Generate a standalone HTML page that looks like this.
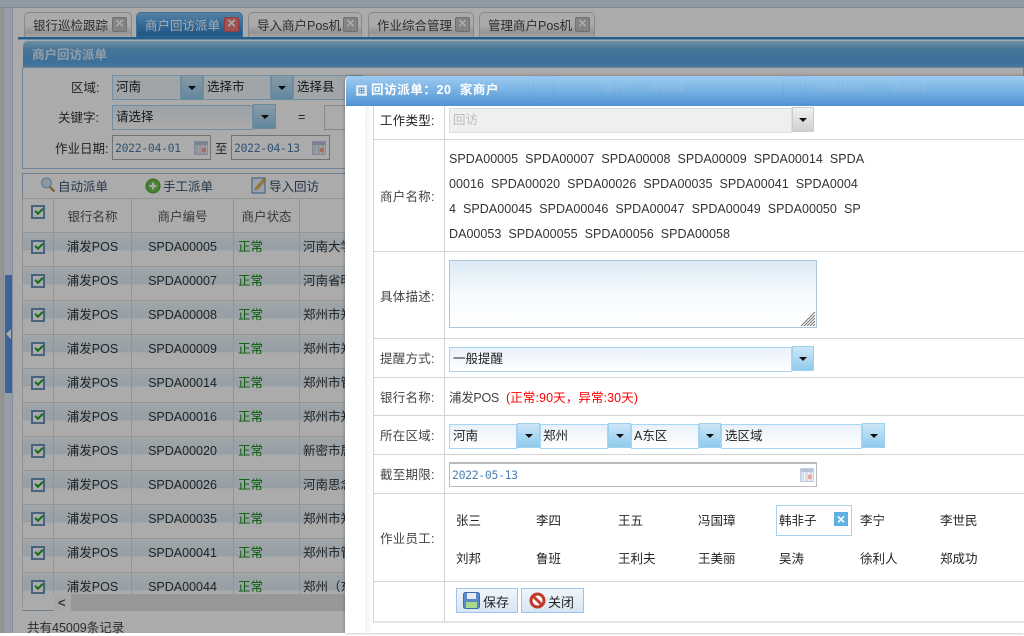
<!DOCTYPE html>
<html><head><meta charset="utf-8"><style>
html,body{margin:0;padding:0}
body{width:1024px;height:633px;overflow:hidden;position:relative;background:#fff;font:12.5px/1.2 "Liberation Sans","Noto Sans CJK SC",sans-serif;color:#333}
div,span,svg{position:absolute;box-sizing:border-box}
.t{white-space:nowrap}
.tab{top:12px;height:26px;border:1px solid #ccc;border-bottom:0;border-radius:5px 5px 0 0;background:linear-gradient(#fff 0,#fff 45%,#ddd 80%,#fff);padding:6px 0 0 8px;white-space:nowrap;font-size:12.5px}
.x{top:4px;width:15px;height:15px;background:#c4c4c4;border:1px solid #a8a8a8;border-radius:2px;color:#fff;font:bold 15px/12px "Liberation Sans";text-align:center}
.in{border:1px solid #a5d6f5;background:linear-gradient(#e9f1fa,#fff);padding:4px 0 0 3px;white-space:nowrap;color:#222}
.btn{background:linear-gradient(#cde7f8,#8fcaec);border:1px solid #9fd0ee}
.btn:after{content:"";position:absolute;left:50%;top:50%;margin:-2px 0 0 -4px;border:4px solid transparent;border-top:4px solid #111;border-bottom:0}
.dt{border:1px solid #aaa;background:#fff;color:#4b7db0;font:11.5px/24px "DejaVu Sans Mono","Liberation Mono",monospace;padding-left:2px;letter-spacing:-.35px}
.cal{width:14px;height:14px;border:1px solid #c4cde0;background:linear-gradient(#b4c2da 0,#b4c2da 3px,transparent 3px),repeating-linear-gradient(90deg,#d5dded 0,#d5dded 3px,#f4f6fa 3px,#f4f6fa 4px)}
.cal:after{content:"";position:absolute;right:1px;bottom:2px;width:4px;height:4px;background:#f2a48d}
table{position:absolute;border-collapse:collapse;table-layout:fixed;left:22px;top:198px;width:340px}
td{height:29px;padding:0 0 4px;border:1px solid #dcdcdc;text-align:center;white-space:nowrap;overflow:hidden;background:linear-gradient(#eef6fb,#e0eef8 50%,#fff 52%,#fff)}
tr.h td{background:#fff;padding:3px 0 0;height:30px}
tr.h td:first-child{padding:0 0 5px;height:28px}
td.s{color:#0a8a0a;text-align:left;padding-left:4px}
td.a{text-align:left;padding-left:3px}
td b{display:inline-block;box-sizing:border-box;vertical-align:middle;position:relative;width:14px;height:14px;border:2px solid #6a94bd;background:#fff;margin-top:-2px}
td b:after{content:"";position:absolute;left:2px;top:1px;width:6px;height:3px;border:solid #20a02a;border-width:0 0 2px 2px;transform:rotate(-45deg)}
.line{left:373px;height:1px;width:651px;background:#d4d4d4}
.lb{left:380px;white-space:nowrap;color:#444;letter-spacing:.25px}
.st{white-space:nowrap;color:#222;font-size:12.5px}
.code{left:449px;white-space:pre;color:#333;font-size:12.5px;letter-spacing:.04px}
.b2{top:588px;height:25px;border:1px solid #9cc4ec;background:linear-gradient(#f0f6fc,#d7e5f2);padding:6px 0 0 26px;font-size:13px;color:#222}
</style></head><body>
<!-- background page -->
<div style="left:0;top:0;width:1024px;height:8px;background:linear-gradient(90deg,#d7e9f0,#d6e9f2)"></div>
<div style="left:0;top:7px;width:1024px;height:1px;background:#b6cfe6"></div>
<div style="left:0;top:8px;width:3px;height:625px;background:#ddd"></div>
<div style="left:3px;top:8px;width:10px;height:625px;background:#e2ecf6;border-left:1px solid #c3d5e9;border-right:1px solid #c3d5e9"></div>
<div style="left:5px;top:275px;width:7px;height:118px;background:#5b92e6"></div>
<div style="left:6px;top:329px;border:5px solid transparent;border-right:5px solid #fff;border-left:0"></div>
<div class="tab" style="left:24px;width:108px;color:#444">银行巡检跟踪<span class="x" style="left:87px">×</span></div>
<div class="tab" style="left:136px;width:107px;background:linear-gradient(#7fc4f7,#4a9ade 50%,#2f83c9 85%,#4e9ee0);color:#fff;border-color:#5aa5e0">商户回访派单<span class="x" style="left:87px;background:#f07a7a;border-color:#d55">×</span></div>
<div class="tab" style="left:248px;width:114px;color:#444">导入商户Pos机<span class="x" style="left:94px">×</span></div>
<div class="tab" style="left:368px;width:106px;color:#444">作业综合管理<span class="x" style="left:86px">×</span></div>
<div class="tab" style="left:479px;width:116px;color:#444">管理商户Pos机<span class="x" style="left:95px">×</span></div>
<div style="left:18px;top:37px;width:1006px;height:2px;background:#3b8ccc"></div>
<div style="left:18px;top:39px;width:1006px;height:1px;background:#9fcdf0"></div>
<div style="left:23px;top:41px;width:1001px;height:27px;background:linear-gradient(#a5d4f4,#6bb0e4 30%,#5aa7e6 75%,#6fb3ea);border-radius:5px 0 0 0"></div>
<div class="t" style="left:32px;top:48px;color:#d8ecfb;font-weight:bold;font-size:12.5px">商户回访派单</div>
<div style="left:22px;top:67px;width:1002px;height:102px;border:1px solid #a8c6e6;background:#fff"></div>
<div class="t" style="left:71px;top:81px">区域:</div>
<div class="in" style="left:112px;top:75px;width:69px;height:25px;background:#f1f6fb;font-size:12.5px">河南</div><div class="btn" style="left:181px;top:75px;width:22px;height:25px"></div>
<div class="in" style="left:203px;top:75px;width:68px;height:25px;background:#f1f6fb">选择市</div><div class="btn" style="left:271px;top:75px;width:22px;height:25px"></div>
<div class="in" style="left:293px;top:75px;width:70px;height:25px;background:#f1f6fb">选择县</div>
<div class="t" style="left:58px;top:111px">关键字:</div>
<div class="in" style="left:112px;top:105px;width:141px;height:25px">请选择</div><div class="btn" style="left:253px;top:104px;width:23px;height:25px"></div>
<div class="t" style="left:298px;top:110px">=</div>
<div style="left:324px;top:105px;width:30px;height:25px;border:1px solid #ccc"></div>
<div class="t" style="left:55px;top:142px">作业日期:</div>
<div class="dt" style="left:112px;top:135px;width:99px;height:25px">2022-04-01<span class="cal" style="left:81px;top:5px"></span></div>
<div class="t" style="left:215px;top:142px">至</div>
<div class="dt" style="left:231px;top:135px;width:99px;height:25px">2022-04-13<span class="cal" style="left:80px;top:5px"></span></div>
<div style="left:22px;top:173px;width:1002px;height:416px;border:1px solid #a8bfd8;background:#fff"></div>
<svg style="left:40px;top:176px" width="16" height="18" viewBox="0 0 16 18"><circle cx="6.500" cy="7" r="5" fill="#cfe2f5" stroke="#8fb0d2"/><path d="M10 11l4.500 4.500" stroke="#c29058" stroke-width="2.500"/></svg>
<div class="t" style="left:58px;top:180px;color:#34506d">自动派单</div>
<svg style="left:145px;top:178px" width="16" height="16" viewBox="0 0 16 16"><circle cx="8" cy="8" r="7" fill="#6cc04a" stroke="#4f9a35"/><path d="M8 4.500v7M4.500 8h7" stroke="#fff" stroke-width="2.200"/></svg>
<div class="t" style="left:163px;top:180px;color:#34506d">手工派单</div>
<svg style="left:251px;top:176px" width="17" height="18" viewBox="0 0 17 18"><rect x="1" y="2" width="13" height="15" fill="#e8f1fb" stroke="#4f86c0"/><path d="M4 14l1-3 8-9 2 2-8 9z" fill="#e9b44c" stroke="#b98a2e" stroke-width=".5"/></svg>
<div class="t" style="left:269px;top:180px;color:#34506d">导入回访</div>
<table><colgroup><col style="width:31px"><col style="width:78px"><col style="width:102px"><col style="width:66px"><col style="width:63px"></colgroup>
<tr class="h"><td><b></b></td><td style="color:#555">银行名称</td><td style="color:#555">商户编号</td><td style="color:#555">商户状态</td><td></td></tr>
<tr><td><b></b></td><td>浦发POS</td><td>SPDA00005</td><td class="s">正常</td><td class="a">河南大学</td></tr>
<tr><td><b></b></td><td>浦发POS</td><td>SPDA00007</td><td class="s">正常</td><td class="a">河南省明</td></tr>
<tr><td><b></b></td><td>浦发POS</td><td>SPDA00008</td><td class="s">正常</td><td class="a">郑州市郑</td></tr>
<tr><td><b></b></td><td>浦发POS</td><td>SPDA00009</td><td class="s">正常</td><td class="a">郑州市郑</td></tr>
<tr><td><b></b></td><td>浦发POS</td><td>SPDA00014</td><td class="s">正常</td><td class="a">郑州市管</td></tr>
<tr><td><b></b></td><td>浦发POS</td><td>SPDA00016</td><td class="s">正常</td><td class="a">郑州市郑</td></tr>
<tr><td><b></b></td><td>浦发POS</td><td>SPDA00020</td><td class="s">正常</td><td class="a">新密市居</td></tr>
<tr><td><b></b></td><td>浦发POS</td><td>SPDA00026</td><td class="s">正常</td><td class="a">河南思念</td></tr>
<tr><td><b></b></td><td>浦发POS</td><td>SPDA00035</td><td class="s">正常</td><td class="a">郑州市郑</td></tr>
<tr><td><b></b></td><td>浦发POS</td><td>SPDA00041</td><td class="s">正常</td><td class="a">郑州市管</td></tr>
<tr><td><b></b></td><td>浦发POS</td><td>SPDA00044</td><td class="s">正常</td><td class="a">郑州（东</td></tr>
</table>
<div style="left:23px;top:594px;width:330px;height:39px;background:#fff"></div>
<div style="left:22px;top:610px;width:332px;height:1px;background:#a8bfd8"></div>
<div style="left:54px;top:594px;width:17px;height:17px;background:#fbfbfb"></div>
<div style="left:71px;top:594px;width:283px;height:17px;background:#e2e2e2"></div>
<div class="t" style="left:58px;top:594px;font:bold 13px/17px 'Liberation Sans';color:#555">&lt;</div>
<div class="t" style="left:27px;top:621px;color:#444">共有45009条记录</div>
<!-- mask -->
<div style="left:0;top:0;width:1024px;height:633px;background:rgba(0,0,0,.33)"></div>
<!-- modal -->
<div style="left:345px;top:76px;width:679px;height:557px;background:#fff;border-radius:5px 0 0 0;box-shadow:0 0 3px rgba(0,0,0,.35)"></div>
<div style="left:346px;top:76px;width:678px;height:30px;background:linear-gradient(#9ccbf0,#7bb4e4 45%,#4f92d3);border-radius:5px 0 0 0"></div>
<div class="t" style="left:602px;top:81px;color:rgba(255,255,255,.08)">银行：</div><div class="t" style="left:647px;top:81px;color:rgba(255,255,255,.08)">请选择</div>
<div class="t" style="left:817px;top:81px;color:rgba(255,255,255,.08)">分配状态：</div><div class="t" style="left:890px;top:81px;color:rgba(255,255,255,.08)">请选择</div>
<div style="left:533px;top:76px;width:21px;height:23px;border:1px solid rgba(60,120,180,.08)"></div>
<div style="left:783px;top:76px;width:23px;height:23px;border:1px solid rgba(60,120,180,.08)"></div>
<svg style="left:356px;top:85px" width="11" height="11" viewBox="0 0 11 11"><rect x=".5" y=".5" width="10" height="10" fill="#e9f3fb" stroke="#cfe2f4"/><path d="M3 3h5v5H3zM5.500 3v5M3 5.500h5" fill="none" stroke="#5a90c4"/></svg>
<div class="t" style="left:371px;top:83px;color:#fff;font-weight:bold;font-size:12.5px;letter-spacing:.6px">回访派单：20&nbsp; 家商户</div>
<div style="left:365px;top:106px;width:8px;height:527px;background:linear-gradient(90deg,#f3f3f3,#fff)"></div>
<div style="left:373px;top:106px;width:1px;height:516px;background:#d4d4d4"></div>
<div style="left:444px;top:106px;width:1px;height:516px;background:#d4d4d4"></div>
<div class="line" style="top:139px"></div><div class="line" style="top:251px"></div><div class="line" style="top:338px"></div><div class="line" style="top:377px"></div><div class="line" style="top:415px"></div><div class="line" style="top:454px"></div><div class="line" style="top:493px"></div><div class="line" style="top:581px"></div>
<div class="line" style="top:621px;height:2px;background:#e4e4e4"></div>
<div class="lb" style="top:114px;color:#222">工作类型:</div>
<div style="left:449px;top:108px;width:343px;height:25px;background:#efefef;border:1px solid #ddd;padding:4px 0 0 3px;color:#bbb">回访</div>
<div class="btn" style="left:792px;top:107px;width:22px;height:25px;background:linear-gradient(#f2f2f2,#cfcfcf);border-color:#ccc"></div>
<div class="lb" style="top:190px">商户名称:</div>
<div class="code" style="top:152px">SPDA00005  SPDA00007  SPDA00008  SPDA00009  SPDA00014  SPDA</div>
<div class="code" style="top:177px">00016  SPDA00020  SPDA00026  SPDA00035  SPDA00041  SPDA0004</div>
<div class="code" style="top:202px">4  SPDA00045  SPDA00046  SPDA00047  SPDA00049  SPDA00050  SP</div>
<div class="code" style="top:227px">DA00053  SPDA00055  SPDA00056  SPDA00058</div>
<div class="lb" style="top:290px">具体描述:</div>
<div style="left:449px;top:260px;width:368px;height:68px;border:1px solid #a9c7de;background:linear-gradient(#dceaf5,#f5fafd 50%,#fff)"></div>
<svg style="left:800px;top:311px" width="16" height="16" viewBox="0 0 16 16"><path d="M1 15L15 1M4 15L15 4M7 15l8-8M10 15l5-5M13 15l2-2" stroke="#777" stroke-width="1" fill="none"/></svg>
<div class="lb" style="top:352px">提醒方式:</div>
<div class="in" style="left:449px;top:347px;width:343px;height:25px">一般提醒</div><div class="btn" style="left:792px;top:346px;width:22px;height:25px"></div>
<div class="lb" style="top:391px">银行名称:</div>
<div class="t" style="left:449px;top:391px;color:#444;letter-spacing:-.3px">浦发POS</div>
<div class="t" style="left:506px;top:391px;color:#f00;letter-spacing:.1px">(正常:90天，异常:30天)</div>
<div class="lb" style="top:429px">所在区域:</div>
<div class="in" style="left:449px;top:424px;width:68px;height:25px">河南</div><div class="btn" style="left:517px;top:423px;width:23px;height:25px"></div>
<div class="in" style="left:540px;top:424px;width:68px;height:25px;padding-left:2px">郑州</div><div class="btn" style="left:608px;top:423px;width:23px;height:25px"></div>
<div class="in" style="left:631px;top:424px;width:68px;height:25px;padding-left:2px">A东区</div><div class="btn" style="left:699px;top:423px;width:22px;height:25px"></div>
<div class="in" style="left:721px;top:424px;width:141px;height:25px">选区域</div><div class="btn" style="left:862px;top:423px;width:23px;height:25px"></div>
<div class="lb" style="top:468px">截至期限:</div>
<div class="dt" style="left:449px;top:462px;width:368px;height:25px;border:1px solid #bbb;border-top-width:2px;padding-left:2px;line-height:22px">2022-05-13<span class="cal" style="left:350px;top:4px"></span></div>
<div class="lb" style="top:532px">作业员工:</div>
<div class="st" style="left:456px;top:514px">张三</div><div class="st" style="left:536px;top:514px">李四</div><div class="st" style="left:618px;top:514px">王五</div><div class="st" style="left:698px;top:514px">冯国璋</div>
<div style="left:776px;top:505px;width:76px;height:31px;border:1px solid #a6d2f0"></div>
<div class="st" style="left:779px;top:514px">韩非子</div>
<div style="left:834px;top:512px;width:14px;height:14px;background:#5fb0e4;color:#fff;font:bold 14px/14px 'Liberation Sans';text-align:center">×</div>
<div class="st" style="left:860px;top:514px">李宁</div><div class="st" style="left:940px;top:514px">李世民</div>
<div class="st" style="left:456px;top:552px">刘邦</div><div class="st" style="left:536px;top:552px">鲁班</div><div class="st" style="left:618px;top:552px">王利夫</div><div class="st" style="left:698px;top:552px">王美丽</div><div class="st" style="left:779px;top:552px">吴涛</div><div class="st" style="left:860px;top:552px">徐利人</div><div class="st" style="left:940px;top:552px">郑成功</div>
<div class="b2" style="left:456px;width:62px">保存
<svg style="left:6px;top:3px" width="17" height="17" viewBox="0 0 17 17"><rect x=".5" y=".5" width="16" height="16" rx="2" fill="#5b8ac8" stroke="#3f6ca8"/><rect x="4" y="1" width="9" height="6" fill="#e4edf7"/><rect x="3" y="10" width="11" height="6" fill="#a8d88c"/></svg></div>
<div class="b2" style="left:521px;width:63px">关闭
<svg style="left:7px;top:3px" width="17" height="17" viewBox="0 0 17 17"><circle cx="8.500" cy="8.500" r="6.500" fill="#fff" stroke="#c0392b" stroke-width="3"/><path d="M4 4l9 9" stroke="#c0392b" stroke-width="3"/></svg></div>
</body></html>
